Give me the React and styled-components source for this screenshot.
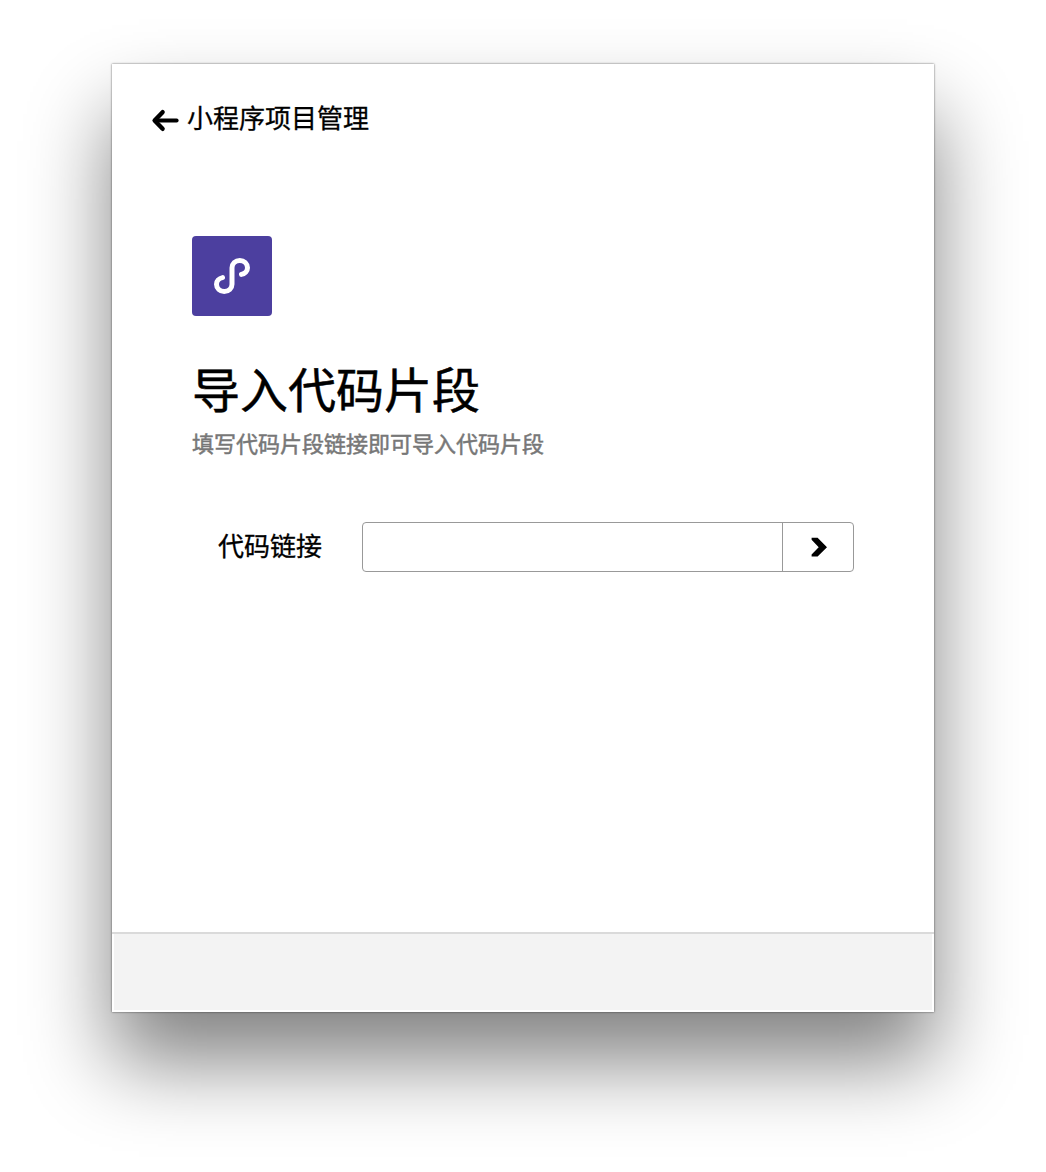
import React from "react";
import styled, { createGlobalStyle } from "styled-components";

const GlobalStyle = createGlobalStyle`
  *, *::before, *::after { box-sizing: border-box; }
  body {
    margin: 0;
    background: #fff;
    color: #000;
    font-family: "Noto Sans CJK SC", sans-serif;
  }
`;

const Desktop = styled.div`
  display: flex;
  justify-content: center;
  align-items: flex-start;
  height: 1172px;
  padding-top: 64px;
  overflow: hidden;
`;

const Window = styled.main`
  display: flex;
  flex-direction: column;
  width: 822px;
  height: 948px;
  background: #fff;
  box-shadow: 0 0 2px rgba(0, 0, 0, 0.6), 0 50px 78px rgba(0, 0, 0, 0.49);
`;

const Header = styled.header`
  display: flex;
  align-items: center;
  gap: 8px;
  height: 110px;
  padding-left: 39px;
`;

const BackIcon = styled.svg`
  width: 28px;
  height: 24px;
  margin-top: 2px;
`;

const BackLabel = styled.span`
  margin-bottom: 4px;
  font-size: 26px;
  line-height: 38px;
  -webkit-text-stroke: 0.3px currentColor;
`;

const Content = styled.section`
  flex: 1;
  padding: 62px 80px 0;
`;

const Logo = styled.svg`
  display: block;
  width: 80px;
  height: 80px;
  border-radius: 4px;
  background: #4c3f9f;
`;

const Title = styled.h1`
  margin: 36px 0 0;
  font-size: 48px;
  line-height: 70px;
  font-weight: 400;
  -webkit-text-stroke: 0.5px currentColor;
`;

const Subtitle = styled.p`
  margin: 4px 0 0;
  font-size: 22px;
  line-height: 32px;
  color: #777;
  -webkit-text-stroke: 0.5px currentColor;
`;

const Field = styled.form`
  display: flex;
  align-items: center;
  margin-top: 64px;
  padding-left: 26px;
`;

const FieldLabel = styled.label`
  width: 144px;
  margin-bottom: 4px;
  font-size: 26px;
  line-height: 38px;
  -webkit-text-stroke: 0.3px currentColor;
`;

const InputGroup = styled.div`
  display: flex;
  width: 492px;
  height: 50px;
  border: 1px solid #999;
  border-radius: 4px;
  overflow: hidden;
`;

const Input = styled.input`
  flex: 1;
  min-width: 0;
  border: 0;
  padding: 0 12px;
  background: transparent;
  font: inherit;
  font-size: 24px;
  outline: none;
`;

const Submit = styled.button`
  display: flex;
  align-items: center;
  justify-content: center;
  width: 71px;
  border: 0;
  border-left: 1px solid #999;
  padding: 0 0 0 2px;
  background: transparent;
`;

const FooterArea = styled.footer`
  display: flex;
  flex-direction: column;
  height: 80px;
`;

const Divider = styled.div`
  height: 2px;
  background: #dadada;
`;

const FooterBar = styled.div`
  flex: 1;
  border: 2px solid #fff;
  border-top: 0;
  background: #f3f3f3;
`;

export default function App() {
  return (
    <Desktop>
      <GlobalStyle />
      <Window>
        <Header>
          <BackIcon viewBox="0 0 28 24" fill="none" stroke="#000" strokeLinecap="round">
            <path d="M11.6 4.2 L3.6 12.5 L11.6 20.8" strokeWidth="4.4" strokeLinejoin="round" />
            <path d="M4 12.5 H25.6" strokeWidth="4" />
            <path d="M3.6 12.5 L8 8.4 V16.6 Z" fill="#000" stroke="none" />
          </BackIcon>
          <BackLabel>小程序项目管理</BackLabel>
        </Header>
        <Content>
          <Logo viewBox="0 0 80 80" fill="none" stroke="#fff" strokeWidth="5" strokeLinecap="round">
            <path d="M49.5 38.4 C53 37.7 55.5 35 55.5 31.8 C55.5 27.6 52 24.4 47.8 24.4 C43.4 24.4 40 27.6 40 31.8 V48.2 C40 52.4 36.6 55.6 32.2 55.6 C28 55.6 24.5 52.4 24.5 48.2 C24.5 45 27 42.3 30.5 41.6" />
          </Logo>
          <Title>导入代码片段</Title>
          <Subtitle>填写代码片段链接即可导入代码片段</Subtitle>
          <Field>
            <FieldLabel htmlFor="code-link">代码链接</FieldLabel>
            <InputGroup>
              <Input id="code-link" />
              <Submit type="button">
                <svg width="18" height="20" viewBox="0 0 18 20">
                  <path d="M1.6 .8 H7.6 L17 10.2 L7.6 19.4 H1.6 V17.4 L8.7 10.2 L1.6 2.8 Z" fill="#000" />
                </svg>
              </Submit>
            </InputGroup>
          </Field>
        </Content>
        <FooterArea>
          <Divider />
          <FooterBar />
        </FooterArea>
      </Window>
    </Desktop>
  );
}
